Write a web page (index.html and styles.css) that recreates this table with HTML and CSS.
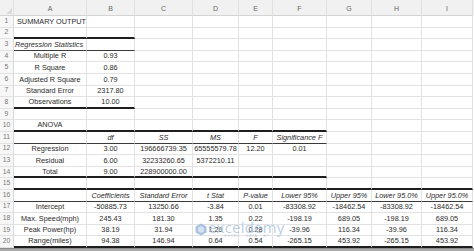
FILE: index.html
```html
<!DOCTYPE html>
<html>
<head>
<meta charset="utf-8">
<link rel="stylesheet" href="styles.css">
</head>
<body>
<div class="sheet">
  <div class="row head">
    <div class="c corner"><span class="tri"></span></div>
    <div class="c">A</div><div class="c">B</div><div class="c">C</div><div class="c">D</div><div class="c">E</div><div class="c">F</div><div class="c">G</div><div class="c">H</div><div class="c">I</div>
  </div>
  <div class="row"><div class="c n">1</div><div class="c l">SUMMARY OUTPUT</div><div class="c"></div><div class="c"></div><div class="c"></div><div class="c"></div><div class="c"></div><div class="c"></div><div class="c"></div><div class="c"></div></div>
  <div class="row"><div class="c n">2</div><div class="c k2"></div><div class="c k2"></div><div class="c"></div><div class="c"></div><div class="c"></div><div class="c"></div><div class="c"></div><div class="c"></div><div class="c"></div></div>
  <div class="row"><div class="c n">3</div><div class="c li k1 i">Regression Statistics</div><div class="c k1"></div><div class="c"></div><div class="c"></div><div class="c"></div><div class="c"></div><div class="c"></div><div class="c"></div><div class="c"></div></div>
  <div class="row"><div class="c n">4</div><div class="c">Multiple R</div><div class="c">0.93</div><div class="c"></div><div class="c"></div><div class="c"></div><div class="c"></div><div class="c"></div><div class="c"></div><div class="c"></div></div>
  <div class="row"><div class="c n">5</div><div class="c">R Square</div><div class="c">0.86</div><div class="c"></div><div class="c"></div><div class="c"></div><div class="c"></div><div class="c"></div><div class="c"></div><div class="c"></div></div>
  <div class="row"><div class="c n">6</div><div class="c">Adjusted R Square</div><div class="c">0.79</div><div class="c"></div><div class="c"></div><div class="c"></div><div class="c"></div><div class="c"></div><div class="c"></div><div class="c"></div></div>
  <div class="row"><div class="c n">7</div><div class="c">Standard Error</div><div class="c">2317.80</div><div class="c"></div><div class="c"></div><div class="c"></div><div class="c"></div><div class="c"></div><div class="c"></div><div class="c"></div></div>
  <div class="row"><div class="c n">8</div><div class="c k2">Observations</div><div class="c k2">10.00</div><div class="c"></div><div class="c"></div><div class="c"></div><div class="c"></div><div class="c"></div><div class="c"></div><div class="c"></div></div>
  <div class="row"><div class="c n">9</div><div class="c"></div><div class="c"></div><div class="c"></div><div class="c"></div><div class="c"></div><div class="c"></div><div class="c"></div><div class="c"></div><div class="c"></div></div>
  <div class="row"><div class="c n">10</div><div class="c k2">ANOVA</div><div class="c k2"></div><div class="c k2"></div><div class="c k2"></div><div class="c k2"></div><div class="c k2"></div><div class="c"></div><div class="c"></div><div class="c"></div></div>
  <div class="row"><div class="c n">11</div><div class="c k1"></div><div class="c k1 i">df</div><div class="c k1 i">SS</div><div class="c k1 i">MS</div><div class="c k1 i">F</div><div class="c k1 i">Significance F</div><div class="c"></div><div class="c"></div><div class="c"></div></div>
  <div class="row"><div class="c n">12</div><div class="c">Regression</div><div class="c">3.00</div><div class="c">196666739.35</div><div class="c">65555579.78</div><div class="c">12.20</div><div class="c">0.01</div><div class="c"></div><div class="c"></div><div class="c"></div></div>
  <div class="row"><div class="c n">13</div><div class="c">Residual</div><div class="c">6.00</div><div class="c">32233260.65</div><div class="c">5372210.11</div><div class="c"></div><div class="c"></div><div class="c"></div><div class="c"></div><div class="c"></div></div>
  <div class="row"><div class="c n">14</div><div class="c k2">Total</div><div class="c k2">9.00</div><div class="c k2">228900000.00</div><div class="c k2"></div><div class="c k2"></div><div class="c k2"></div><div class="c"></div><div class="c"></div><div class="c"></div></div>
  <div class="row"><div class="c n">15</div><div class="c k2"></div><div class="c k2"></div><div class="c k2"></div><div class="c k2"></div><div class="c k2"></div><div class="c k2"></div><div class="c k2"></div><div class="c k2"></div><div class="c k2"></div></div>
  <div class="row"><div class="c n">16</div><div class="c k1"></div><div class="c k1 i">Coefficients</div><div class="c k1 i">Standard Error</div><div class="c k1 i">t Stat</div><div class="c k1 i">P-value</div><div class="c k1 i">Lower 95%</div><div class="c k1 i">Upper 95%</div><div class="c k1 i">Lower 95.0%</div><div class="c k1 i">Upper 95.0%</div></div>
  <div class="row"><div class="c n">17</div><div class="c">Intercept</div><div class="c">-50885.73</div><div class="c">13250.66</div><div class="c">-3.84</div><div class="c">0.01</div><div class="c">-83308.92</div><div class="c">-18462.54</div><div class="c">-83308.92</div><div class="c">-18462.54</div></div>
  <div class="row"><div class="c n">18</div><div class="c">Max. Speed(mph)</div><div class="c">245.43</div><div class="c">181.30</div><div class="c">1.35</div><div class="c">0.22</div><div class="c">-198.19</div><div class="c">689.05</div><div class="c">-198.19</div><div class="c">689.05</div></div>
  <div class="row"><div class="c n">19</div><div class="c">Peak Power(hp)</div><div class="c">38.19</div><div class="c">31.94</div><div class="c">1.20</div><div class="c">0.28</div><div class="c">-39.96</div><div class="c">116.34</div><div class="c">-39.96</div><div class="c">116.34</div></div>
  <div class="row"><div class="c n">20</div><div class="c k2">Range(miles)</div><div class="c k2">94.38</div><div class="c k2">146.94</div><div class="c k2">0.64</div><div class="c k2">0.54</div><div class="c k2">-265.15</div><div class="c k2">453.92</div><div class="c k2">-265.15</div><div class="c k2">453.92</div></div>
  <div class="foot"></div>

  <div class="mark">
    <svg class="logo" width="12" height="13" viewBox="0 0 12 13">
      <path d="M6 0.5 L11.5 3.5 L11.5 9.5 L6 12.5 L0.5 9.5 L0.5 3.5 Z" fill="#8fb0d8"/>
      <path d="M6 3 L9 4.8 L9 8.2 L6 10 L3 8.2 L3 4.8 Z" fill="#c7d8ec"/>
    </svg>
    <div class="mtext">
      <div class="brand">exceldemy</div>
      <div class="tag">EXCEL · DATA · BI</div>
    </div>
  </div>
</div>
</body>
</html>
```

FILE: styles.css
```css
html, body {
  margin: 0;
  padding: 0;
  background: #ffffff;
}

.sheet {
  position: relative;
  width: 474px;
  height: 251px;
  overflow: hidden;
  font-family: "Liberation Sans", Arial, sans-serif;
  font-size: 7.3px;
  color: #2b2b2b;
}

.row {
  display: grid;
  grid-template-columns: 14px 73px 48px 58px 46px 34px 54px 45px 50px 51px;
  height: 11.6px;
}

.row.head {
  height: 16px;
  background: #f1f1f1;
  color: #666;
  font-size: 7px;
}

.c {
  box-sizing: border-box;
  display: flex;
  align-items: center;
  justify-content: center;
  white-space: nowrap;
  border-right: 1px solid #e2e2e2;
  border-bottom: 1px solid #e2e2e2;
  min-width: 0;
  overflow: visible;
  line-height: 1;
}

.head .c {
  border-right: 1px solid #e0e0e0;
  border-bottom: 1px solid #d4d4d4;
  padding-top: 2px;
}

.corner {
  position: relative;
}

.tri {
  position: absolute;
  right: 1px;
  bottom: 1px;
  width: 0;
  height: 0;
  border-left: 6px solid transparent;
  border-bottom: 6px solid #dcdcdc;
}

.n {
  color: #777;
  font-size: 6.8px;
  background: #f7f7f7;
  border-right: 1px solid #dadada;
}

.l {
  justify-content: flex-start;
  padding-left: 3px;
}

.li {
  justify-content: flex-start;
  padding-left: 1px;
}

.i {
  font-style: italic;
}

.k2 {
  border-bottom: 2px solid #1e1e1e;
}

.k1 {
  border-bottom: 1px solid #3a3a3a;
}

.foot {
  height: 4px;
  background: #a9a9a9;
  border-top: 1px solid #8c8c8c;
}

.mark {
  position: absolute;
  left: 195px;
  top: 221px;
  display: flex;
  align-items: flex-start;
  gap: 1px;
  opacity: 0.75;
}

.logo {
  margin-top: 2px;
}

.mtext {
  display: flex;
  flex-direction: column;
  align-items: center;
}

.brand {
  font-family: "Open Sans", "Liberation Sans", sans-serif;
  font-size: 15px;
  line-height: 13px;
  color: #a8c0e0;
  letter-spacing: 0.2px;
}

.tag {
  font-family: "Liberation Sans", sans-serif;
  font-size: 3.6px;
  letter-spacing: 0.8px;
  color: #a9bdd8;
  line-height: 4px;
}
```
